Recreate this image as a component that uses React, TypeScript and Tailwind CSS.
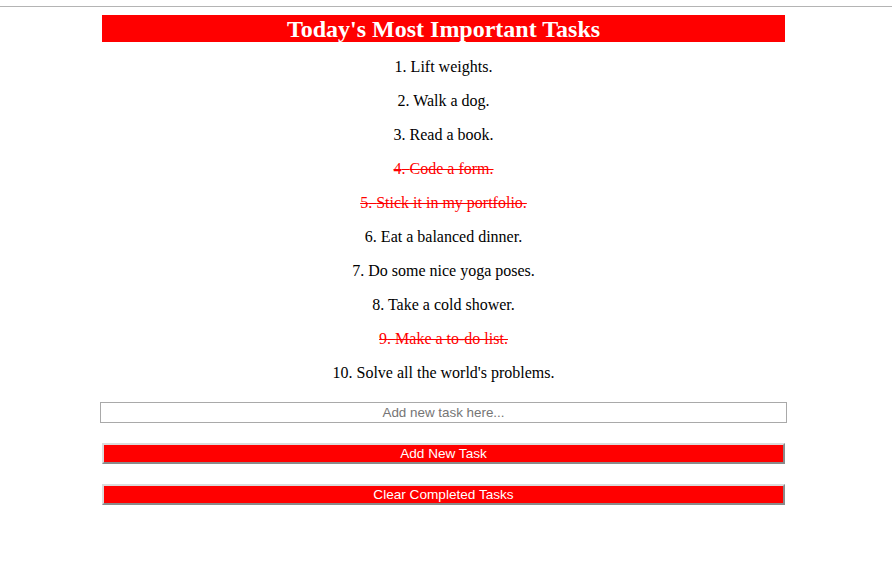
import { useState } from 'react';

type Task = { text: string; done: boolean };

const initialTasks: Task[] = [
  { text: 'Lift weights.', done: false },
  { text: 'Walk a dog.', done: false },
  { text: 'Read a book.', done: false },
  { text: 'Code a form.', done: true },
  { text: 'Stick it in my portfolio.', done: true },
  { text: 'Eat a balanced dinner.', done: false },
  { text: 'Do some nice yoga poses.', done: false },
  { text: 'Take a cold shower.', done: false },
  { text: 'Make a to-do list.', done: true },
  { text: "Solve all the world's problems.", done: false },
];

export default function App() {
  const [tasks, setTasks] = useState<Task[]>(initialTasks);
  const [draft, setDraft] = useState('');

  const addTask = () => {
    if (!draft.trim()) return;
    setTasks([...tasks, { text: draft.trim(), done: false }]);
    setDraft('');
  };

  return (
    <div className="min-h-[579px] w-full bg-white font-['Liberation_Serif',serif] text-black">
      <div className="h-[6px]" />
      <div className="h-px w-full bg-[#b4b4b4]" />

      <div className="ml-[102px] mt-[8px] flex w-[683px] flex-col items-center">
        <h1 className="flex h-[27px] w-full items-center justify-center bg-[#ff0000] text-[24px] font-bold leading-none text-white">
          Today's Most Important Tasks
        </h1>

        <ul className="mt-[16px] flex w-full flex-col items-center gap-[16px]">
          {tasks.map((t, i) => (
            <li
              key={i}
              onClick={() =>
                setTasks(tasks.map((x, j) => (j === i ? { ...x, done: !x.done } : x)))
              }
              className={
                t.done
                  ? 'h-[18px] cursor-pointer text-[16px] leading-[18px] text-[#ff0000] line-through'
                  : 'h-[18px] cursor-pointer text-[16px] leading-[18px]'
              }
            >
              {i + 1}. {t.text}
            </li>
          ))}
        </ul>

        <input
          value={draft}
          onChange={(e) => setDraft(e.target.value)}
          placeholder="Add new task here..."
          className="mt-[20px] h-[21px] w-[687px] border border-[#a9a9a9] bg-white text-center font-['Liberation_Sans',sans-serif] text-[13.4px] text-black outline-none placeholder:text-[#757575]"
        />

        <button
          onClick={addTask}
          className="mt-[20px] h-[21px] w-full border-2 border-t-[#dcdcdc] border-l-[#dcdcdc] border-b-[#8a8a8a] border-r-[#8a8a8a] bg-[#ff0000] font-['Liberation_Sans',sans-serif] text-[13.6px] leading-none text-white"
        >
          Add New Task
        </button>

        <button
          onClick={() => setTasks(tasks.filter((t) => !t.done))}
          className="mt-[20px] h-[21px] w-full border-2 border-t-[#dcdcdc] border-l-[#dcdcdc] border-b-[#8a8a8a] border-r-[#8a8a8a] bg-[#ff0000] font-['Liberation_Sans',sans-serif] text-[13.6px] leading-none text-white"
        >
          Clear Completed Tasks
        </button>
      </div>
    </div>
  );
}
